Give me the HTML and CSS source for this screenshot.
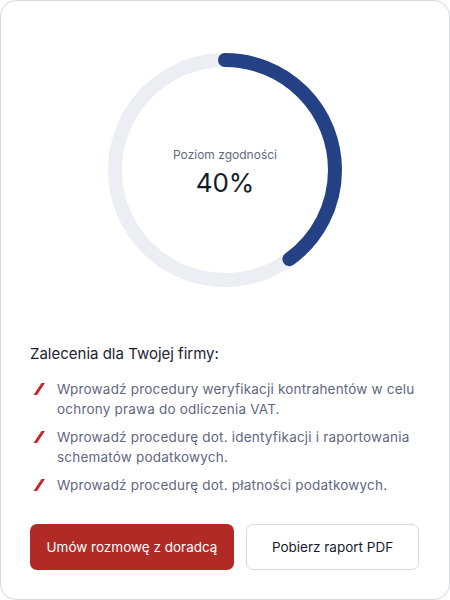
FILE: index.html
```html
<!DOCTYPE html>
<html lang="pl">
<head>
<meta charset="utf-8">
<link rel="stylesheet" href="styles.css">
</head>
<body>
<div class="card">
  <div class="gauge">
    <svg class="gauge-svg" width="234" height="234" viewBox="0 0 234 234">
      <circle cx="117" cy="117" r="110" fill="none" stroke="#eceef4" stroke-width="14"/>
      <circle cx="117" cy="117" r="110" fill="none" stroke="#254185" stroke-width="14" stroke-linecap="round" stroke-dasharray="276.46 1000" transform="rotate(-90 117 117)"/>
    </svg>
    <div class="gauge-label">
      <div class="gauge-title">Poziom zgodności</div>
      <div class="gauge-value">40%</div>
    </div>
  </div>
  <h2 class="heading">Zalecenia dla Twojej firmy:</h2>
  <ul class="recs">
    <li class="rec"><svg class="rec-icon" width="14" height="14" viewBox="0 0 14 14"><polygon points="9.5,1 13,1 5,13 1.5,13" fill="#c0282b"/></svg><span>Wprowadź procedury weryfikacji kontrahentów w celu ochrony prawa do odliczenia VAT.</span></li>
    <li class="rec"><svg class="rec-icon" width="14" height="14" viewBox="0 0 14 14"><polygon points="9.5,1 13,1 5,13 1.5,13" fill="#c0282b"/></svg><span>Wprowadź procedurę dot. identyfikacji i raportowania schematów podatkowych.</span></li>
    <li class="rec"><svg class="rec-icon" width="14" height="14" viewBox="0 0 14 14"><polygon points="9.5,1 13,1 5,13 1.5,13" fill="#c0282b"/></svg><span>Wprowadź procedurę dot. płatności podatkowych.</span></li>
  </ul>
  <div class="actions">
    <button class="btn btn-primary">Umów rozmowę z doradcą</button>
    <button class="btn btn-secondary">Pobierz raport PDF</button>
  </div>
</div>
</body>
</html>
```
FILE: styles.css
```css
* { box-sizing: border-box; }
html, body { margin: 0; padding: 0; background: #fff; }
body { font-family: Inter, "Noto Sans", sans-serif; }
.card {
  width: 450px;
  height: 600px;
  border: 1px solid #d6d9e0;
  border-radius: 16px;
  padding: 52px 29px 0 29px;
  display: flex;
  flex-direction: column;
}
.gauge {
  position: relative;
  width: 234px;
  height: 234px;
  align-self: center;
}
.gauge-svg { display: block; }
.gauge-label {
  position: absolute;
  inset: 0;
  display: flex;
  flex-direction: column;
  align-items: center;
  justify-content: center;
  padding-top: 7px;
}
.gauge-title {
  font-size: 12px;
  color: #5f6a80;
  line-height: 18px;
}
.gauge-value {
  font-size: 26px;
  color: #161b2b;
  line-height: 36px;
  margin-top: 1px;
}
.heading {
  margin: 56px 0 0 0;
  font-size: 15px;
  font-weight: 400;
  line-height: 22px;
  color: #1d2230;
}
.recs {
  list-style: none;
  margin: 14px 0 0 0;
  padding: 0;
  display: flex;
  flex-direction: column;
  gap: 8px;
}
.rec {
  display: flex;
  gap: 11px;
  font-size: 13.5px;
  letter-spacing: 0.2px;
  line-height: 20px;
  color: #5f6880;
}
.rec-icon { flex: none; margin-top: 3px; margin-left: 2px; }
.actions {
  display: flex;
  gap: 12px;
  margin-top: 29px;
}
.btn {
  height: 46px;
  border-radius: 7px;
  font-family: Inter, "Noto Sans", sans-serif;
  font-size: 13.5px;
  font-weight: 400;
  cursor: pointer;
}
.btn-primary {
  width: 204px;
  background: #b22a26;
  color: #fff;
  border: none;
}
.btn-secondary {
  width: 173px;
  background: #fff;
  color: #161b2b;
  border: 1px solid #d6d9e0;
}
```
